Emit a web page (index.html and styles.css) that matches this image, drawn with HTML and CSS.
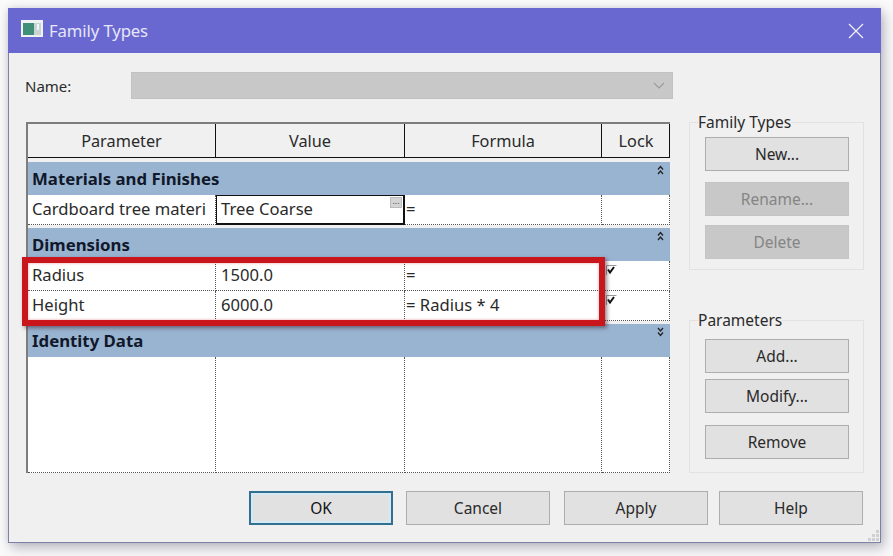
FILE: index.html
```html
<!DOCTYPE html>
<html lang="en">
<head>
<meta charset="utf-8">
<title>Family Types</title>
<link rel="stylesheet" href="styles.css">
</head>
<body>
<div class="window">
  <header class="titlebar">
    <svg class="app-icon" width="22" height="17" viewBox="0 0 22 17"><rect width="22" height="17" fill="#eef2f2"/><rect x="2" y="3" width="11" height="12" fill="#3f8f78"/><rect x="13" y="3" width="7" height="12" fill="#c9d3d3"/><rect x="16" y="4" width="2" height="6" fill="#f4f6f6"/></svg>
    <span class="title">Family Types</span>
    <svg class="close" width="16" height="16" viewBox="0 0 16 16"><path d="M1 1l14 14M15 1L1 15" stroke="#f2f2fa" stroke-width="1.2" fill="none"/></svg>
  </header>
  <div class="content">
    <div class="name-row">
      <label class="name-label">Name:</label>
      <div class="name-select">
        <svg width="12" height="7" viewBox="0 0 12 7"><path d="M1 1l5 5 5-5" stroke="#9c9c9c" stroke-width="1.2" fill="none"/></svg>
      </div>
    </div>
    <div class="main-row">
      <div class="grid">
        <div class="row head">
          <div class="hcell">Parameter</div><div class="hcell">Value</div><div class="hcell">Formula</div><div class="hcell">Lock</div>
        </div>
        <div class="group g1">Materials and Finishes
          <svg class="chev" width="7" height="10" viewBox="0 0 7 10"><path d="M1 4.5l2.5-3 2.5 3M1 9l2.5-3 2.5 3" stroke="#222" stroke-width="1.3" fill="none"/></svg>
        </div>
        <div class="row data">
          <div class="cell">Cardboard tree materi</div>
          <div class="cell editing">Tree Coarse<span class="dots">...</span></div>
          <div class="cell formula">=</div><div class="cell"></div>
        </div>
        <div class="group g2">Dimensions
          <svg class="chev" width="7" height="10" viewBox="0 0 7 10"><path d="M1 4.5l2.5-3 2.5 3M1 9l2.5-3 2.5 3" stroke="#222" stroke-width="1.3" fill="none"/></svg>
        </div>
        <div class="row data">
          <div class="cell">Radius</div><div class="cell val">1500.0</div><div class="cell formula">=</div>
          <div class="cell lock"><svg width="11" height="11" viewBox="0 0 11 11"><path d="M0.5 10V0.5H10.5" stroke="#999" fill="none"/><path d="M2 4.5l2 3 4-5.5" stroke="#111" stroke-width="2" fill="none"/></svg></div>
        </div>
        <div class="row data">
          <div class="cell">Height</div><div class="cell val">6000.0</div><div class="cell formula">= Radius * 4</div>
          <div class="cell lock"><svg width="11" height="11" viewBox="0 0 11 11"><path d="M0.5 10V0.5H10.5" stroke="#999" fill="none"/><path d="M2 4.5l2 3 4-5.5" stroke="#111" stroke-width="2" fill="none"/></svg></div>
        </div>
        <div class="group g3">Identity Data
          <svg class="chev" width="7" height="10" viewBox="0 0 7 10"><path d="M1 1l2.5 3 2.5-3M1 5.5l2.5 3 2.5-3" stroke="#222" stroke-width="1.3" fill="none"/></svg>
        </div>
        <div class="row empty"><div class="cell"></div><div class="cell"></div><div class="cell"></div><div class="cell"></div></div>
        <div class="highlight"></div>
      </div>
      <aside class="side">
        <fieldset class="box box-types">
          <legend>Family Types</legend>
          <button class="btn">New...</button>
          <button class="btn off gap-11">Rename...</button>
          <button class="btn off gap-9">Delete</button>
        </fieldset>
        <fieldset class="box box-params">
          <legend>Parameters</legend>
          <button class="btn">Add...</button>
          <button class="btn gap-6">Modify...</button>
          <button class="btn gap-12">Remove</button>
        </fieldset>
      </aside>
    </div>
    <footer class="actions">
      <button class="btn default">OK</button>
      <button class="btn">Cancel</button>
      <button class="btn apply">Apply</button>
      <button class="btn help">Help</button>
    </footer>
  </div>
  <svg class="grip" width="12" height="12" viewBox="0 0 12 12"><path d="M8 0h3v3H8zM4 4h3v3H4zM8 4h3v3H8zM0 8h3v3H0zM4 8h3v3H4zM8 8h3v3H8z" fill="#cfcfd4"/></svg>
</div>
</body>
</html>
```
FILE: styles.css
```css
* { box-sizing: border-box; }
html, body { margin: 0; height: 100%; }
body {
  background: #fafafb;
  padding: 8px 12px 13px 8px;
  font-family: "Noto Sans", "Open Sans", sans-serif;
  font-size: 16px;
  color: #2a2a2a;
  overflow: hidden;
}
.window {
  position: relative;
  width: 873px;
  height: 535px;
  background: #f0f0f0;
  border: 1px solid #7f7fa8;
  border-top: 0;
  box-shadow: 3px 5px 12px rgba(70, 70, 90, 0.35), 0 0 6px rgba(90, 90, 110, 0.15);
}
.titlebar {
  height: 45px;
  margin: 0 -1px;
  background: #6868d0;
  display: flex;
  align-items: center;
  padding: 0 17px 0 13px;
  color: #e6e6f6;
}
.app-icon { margin-top: -5px; }
.title { margin-left: 6px; font-size: 16.7px; letter-spacing: -0.1px; }
.close { margin-left: auto; }
.content { padding: 19px 0 0 16px; }
.name-row { display: flex; align-items: center; height: 27px; }
.name-label { width: 106px; font-size: 15px; }
.name-select {
  width: 542px;
  height: 27px;
  background: #c8c8c8;
  border: 1px solid #c2c2c2;
  display: flex;
  align-items: center;
  justify-content: flex-end;
  padding-right: 7px;
}
.main-row { display: flex; margin-top: 22px; align-items: flex-start; }
.grid {
  position: relative;
  width: 644px;
  margin: 1px 0 0 1px;
  height: 351px;
  border-top: 2px solid #7d7d7d;
  border-left: 2px solid #7d7d7d;
  background: #f0f0f0;
  display: flex;
  flex-direction: column;
}
.row { display: grid; grid-template-columns: 188px 189px 197px 68px; }
.head { height: 34px; margin-bottom: 4px; border-bottom: 1px solid #111; border-right: 1px solid #111; }
.hcell {
  display: flex; align-items: center; justify-content: center;
  border-right: 1px solid #111;
  font-size: 16.3px;
}
.hcell:last-child { border-right: 0; }
.group {
  position: relative;
  height: 33px;
  background: #99b4d1;
  color: #10182a;
  font-weight: 700;
  font-size: 16.8px;
  line-height: 33px;
  padding-left: 4px;
}
.g2, .g3 { margin-top: 3px; }
.chev { position: absolute; right: 6px; top: 3px; }
.data { height: 30px; background: #fff; }
.cell {
  position: relative;
  border-right: 1px dotted #555;
  border-bottom: 1px dotted #555;
  padding-left: 4px;
  line-height: 28px;
  font-size: 16.6px;
  white-space: nowrap;
  overflow: hidden;
}
.val { padding-left: 5px; }
.editing { border: 1px solid #111; border-bottom-width: 2px; border-right-width: 2px; line-height: 25px; }
.dots {
  position: absolute; right: 1px; top: 1px;
  width: 12px; height: 11px;
  background: #d4d4d4; border: 1px solid #bbb;
  font-size: 9px; line-height: 6px; text-align: center; color: #555;
}
.formula { padding-left: 1px; }
.lock { padding: 4px 0 0 4px; line-height: 0; }
.empty { flex: 1; background: #fff; }
.highlight {
  position: absolute;
  left: -6px; top: 133px;
  width: 583px; height: 69px;
  border: 6px solid #c8161c;
  box-shadow: 2px 2px 4px rgba(60, 30, 40, 0.55), inset 0 0 3px rgba(200, 22, 28, 0.4);
  pointer-events: none;
}
.side { margin-left: 19px; width: 175px; }
.box {
  margin: 0;
  padding: 0 15px;
  border: 1px solid #e2e2e2;
  display: flex;
  flex-direction: column;
  min-inline-size: 0;
}
.box legend { padding: 0; margin-left: -7px; font-size: 15.5px; line-height: 20px; }
.box-types { height: 158px; margin-top: -9px; }
.box-params { height: 163px; margin-top: 40px; }
.btn {
  display: block;
  width: 144px;
  height: 34px;
  background: #e1e1e1;
  border: 1px solid #adadad;
  font: inherit;
  font-size: 15.5px;
  color: #2a2a2a;
  padding: 0;
}
.box-types .btn:first-of-type { margin-top: 5px; }
.box-params .btn:first-of-type { margin-top: 9px; }
.box .gap-11 { margin-top: 11px; }
.box .gap-9 { margin-top: 9px; }
.box .gap-6 { margin-top: 6px; }
.box .gap-12 { margin-top: 12px; }
.off { background: #c8c8c8; border-color: #c4c4c4; color: #858585; }
.actions { display: flex; gap: 13px; margin: 18px 0 0 224px; }
.apply { margin-left: 1px; }
.help { margin-left: -2px; }
.default { border: 2px solid #33708f; box-shadow: inset 0 0 0 2px #d5e9f5; background: #e1e1e1; color: #111; }
.grip { position: absolute; right: 0; bottom: 0; }
```
